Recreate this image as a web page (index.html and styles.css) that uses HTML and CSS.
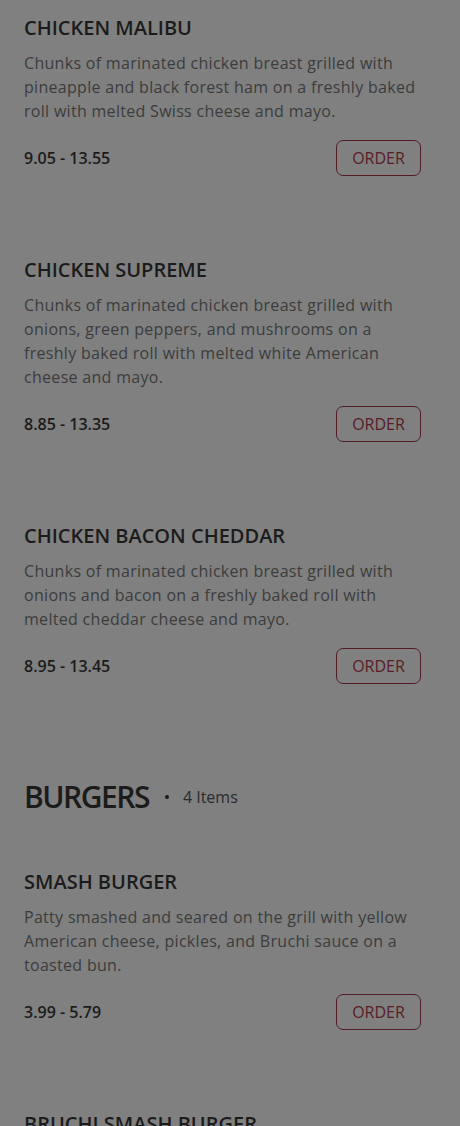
FILE: index.html
```html
<!DOCTYPE html>
<html lang="en">
<head>
<meta charset="utf-8">
<title>Menu</title>
<link rel="stylesheet" href="styles.css">
</head>
<body>
<main class="menu">
  <section class="section">
    <article class="item">
      <h3 class="item-title">CHICKEN MALIBU</h3>
      <p class="item-desc">Chunks of marinated chicken breast grilled with pineapple and black forest ham on a freshly baked roll with melted Swiss cheese and mayo.</p>
      <div class="item-foot">
        <span class="price">9.05 - 13.55</span>
        <button class="order">ORDER</button>
      </div>
    </article>
    <article class="item">
      <h3 class="item-title">CHICKEN SUPREME</h3>
      <p class="item-desc">Chunks of marinated chicken breast grilled with onions, green peppers, and mushrooms on a freshly baked roll with melted white American cheese and mayo.</p>
      <div class="item-foot">
        <span class="price">8.85 - 13.35</span>
        <button class="order">ORDER</button>
      </div>
    </article>
    <article class="item">
      <h3 class="item-title">CHICKEN BACON CHEDDAR</h3>
      <p class="item-desc">Chunks of marinated chicken breast grilled with onions and bacon on a freshly baked roll with melted cheddar cheese and mayo.</p>
      <div class="item-foot">
        <span class="price">8.95 - 13.45</span>
        <button class="order">ORDER</button>
      </div>
    </article>
  </section>
  <section class="section">
    <header class="section-head">
      <h2 class="section-title">BURGERS</h2>
      <span class="dot"></span>
      <span class="count">4 Items</span>
    </header>
    <article class="item">
      <h3 class="item-title">SMASH BURGER</h3>
      <p class="item-desc">Patty smashed and seared on the grill with yellow American cheese, pickles, and Bruchi sauce on a toasted bun.</p>
      <div class="item-foot">
        <span class="price">3.99 - 5.79</span>
        <button class="order">ORDER</button>
      </div>
    </article>
    <article class="item">
      <h3 class="item-title">BRUCHI SMASH BURGER</h3>
    </article>
  </section>
</main>
</body>
</html>
```
FILE: styles.css
```css
html, body {
  margin: 0;
  padding: 0;
  background: #808080;
}
body {
  font-family: "Open Sans", "Noto Sans", sans-serif;
  color: #1b1b1b;
  overflow: hidden;
  height: 1126px;
}
.menu {
  padding: 13px 39px 0 24px;
}
.section-head {
  display: flex;
  align-items: center;
  padding-top: 12px;
  margin-bottom: 48px;
}
.section-title {
  margin: 0;
  font-size: 30px;
  line-height: 44px;
  font-weight: 600;
  color: #1b1b1b;
  letter-spacing: -1.5px;
}
.dot {
  width: 4px;
  height: 4px;
  border-radius: 50%;
  background: #1b1b1b;
  margin: 0 14px 0 16px;
}
.count {
  font-size: 16px;
  color: #2a2a2a;
}
.item {
  margin-bottom: 79px;
}
.item-title {
  margin: 0 0 8px;
  font-size: 20px;
  line-height: 30px;
  font-weight: 600;
  color: #1b1b1b;
}
.item-desc {
  margin: 0 0 17px;
  font-size: 16px;
  line-height: 24px;
  letter-spacing: 0.3px;
  color: #3c3c3c;
}
.item-foot {
  display: flex;
  align-items: center;
  justify-content: space-between;
}
.price {
  font-size: 16px;
  font-weight: 600;
  color: #1b1b1b;
}
.order {
  width: 85px;
  height: 36px;
  border: 1px solid #521c25;
  border-radius: 7px;
  background: transparent;
  color: #581c26;
  font-family: inherit;
  font-size: 16px;
  padding: 0;
}
```
